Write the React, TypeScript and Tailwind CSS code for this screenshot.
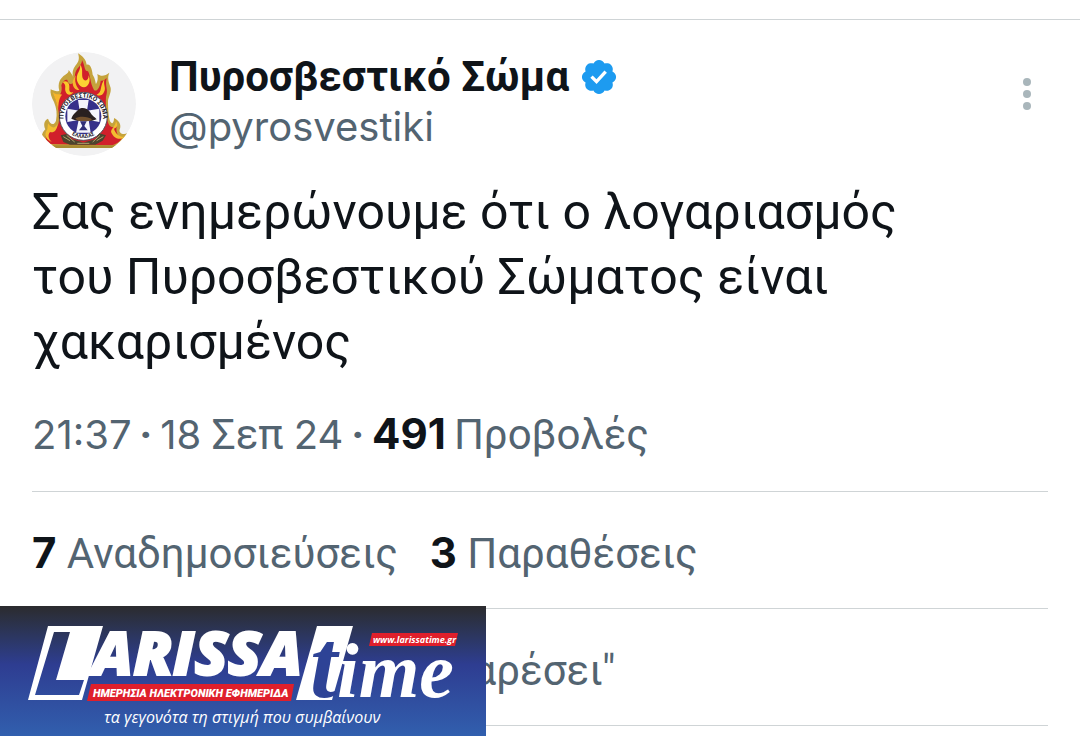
import type { ReactNode } from 'react';

const stats = [
  { count: '7', label: 'Αναδημοσιεύσεις' },
  { count: '3', label: 'Παραθέσεις' },
];

function Emblem() {
  return (
    <svg viewBox="36 36 312 312" className="size-[104px] shrink-0 rounded-full" role="img" aria-label="Πυροσβεστικό Σώμα">
      <circle cx="192" cy="192" r="156" fill="#f2f2f3" />
      {/* Flames */}
      <path
        d="M80 320C60 302 62 282 76 268C70 254 72 242 84 236C90 254 102 258 108 242C112 222 110 206 102 186C94 172 90 160 92 148C102 152 110 156 118 152C112 130 120 114 136 104C142 100 146 98 146 90C154 100 158 106 160 112C154 94 162 82 170 72C178 62 178 52 174 40C190 50 198 60 200 74C210 70 216 84 218 104C226 116 226 126 228 132C234 124 234 114 232 102C246 112 256 106 268 98C260 116 268 130 272 144C274 158 266 170 264 182C264 206 266 230 270 244C276 254 282 250 282 234C298 242 304 254 300 266C294 278 308 286 322 280C316 306 300 320 284 324H100Z"
        fill="#c5a33c"
      />
      <path
        d="M88 312C72 298 74 280 92 266C100 276 112 266 116 248C120 224 114 200 104 168C120 172 128 156 124 136C128 124 136 118 142 120C144 132 152 136 160 128C168 116 160 102 172 86C182 76 186 68 186 60C196 78 192 94 204 94C212 106 210 130 222 150C230 156 240 144 242 122C250 124 254 118 260 114C254 142 266 146 258 170C256 206 260 242 268 256C274 264 282 262 290 258C286 282 298 294 308 292C298 308 286 314 274 316Z"
        fill="#d1202b"
      />
      <path d="M128 126C140 118 150 130 148 144C146 156 154 160 160 156C152 168 140 166 136 152C134 142 140 136 128 126Z" fill="#f8c72a" />
      <path d="M180 74C192 86 182 106 190 118C198 126 206 120 206 106C214 124 204 142 192 142C176 140 166 120 172 104C176 94 182 88 180 74Z" fill="#fbd233" />
      <path d="M168 106C162 122 168 138 178 150C168 152 158 142 158 128C158 120 164 112 168 106Z" fill="#f6b52b" />
      <path d="M254 116C248 134 260 142 252 156C248 166 238 170 230 164C248 156 238 138 254 116Z" fill="#f8c72a" />
      <path d="M98 156C112 168 118 160 126 164C114 178 116 196 114 210C112 192 104 172 98 156Z" fill="#f6b52b" />
      <path d="M84 250C94 266 106 266 112 252C112 272 100 280 90 276C82 286 86 298 96 306C78 300 70 284 82 268Z" fill="#f3bd31" />
      <path d="M288 244C296 256 290 264 282 266C286 282 300 292 314 290C302 302 282 296 274 278C270 268 286 262 288 244Z" fill="#f3bd31" />
      {/* Round seal */}
      <circle cx="190" cy="229" r="72" fill="#fff" stroke="#55515b" strokeWidth="3" />
      <circle cx="190" cy="229" r="54" fill="#36308a" />
      <path d="M174 180H206L201 212L238 206V246L206 240L212 278H168L176 240L142 246V206L179 212Z" fill="#f4f4fb" />
      <path d="M154 236C160 220 170 216 176 208C186 200 202 204 210 216C214 226 226 232 230 238C214 246 176 246 154 236Z" fill="#292020" />
      <path d="M166 236C174 228 204 228 216 238L210 243H176Z" fill="#73512e" />
      <path d="M180 244H200L193 258L203 271H177L187 258Z" fill="#302e77" />
      <path id="seal-top" d="M135 253A59 59 0 1 1 245 253" fill="none" />
      <path id="seal-bottom" d="M139 270A66 66 0 0 0 241 270" fill="none" />
      <text className="font-['Roboto'] font-bold" fontSize="19" fill="#23202b">
        <textPath href="#seal-top" startOffset="50%" textAnchor="middle">ΠΥΡΟΣΒΕΣΤΙΚΟ ΣΩΜΑ</textPath>
      </text>
      <text className="font-['Roboto'] font-bold" fontSize="16" fill="#23202b">
        <textPath href="#seal-bottom" startOffset="50%" textAnchor="middle">ΕΛΛΑΔΑΣ</textPath>
      </text>
      {/* Laurel */}
      <path d="M122 286L140 282L156 298L178 304L190 308L204 304L226 298L238 280L258 286L248 302L226 314H150L130 306Z" fill="#4b442d" />
      <path d="M130 290L150 302M140 286L164 306M250 290L230 302M240 286L218 306M172 310H208" stroke="#b0a36e" strokeWidth="3" />
      <path d="M82 320H300" stroke="#a88b32" strokeWidth="8" />
    </svg>
  );
}

function VerifiedBadge() {
  return (
    <svg viewBox="0 0 22 22" className="size-10 shrink-0" role="img" aria-label="Verified">
      <path
        fill="#1d9bf0"
        d="M20.396 11c-.018-.646-.215-1.275-.57-1.816-.354-.54-.852-.972-1.438-1.246.223-.607.27-1.264.14-1.897-.131-.634-.437-1.218-.882-1.687-.47-.445-1.053-.75-1.687-.882-.633-.13-1.29-.083-1.897.14-.273-.587-.704-1.086-1.245-1.44S11.647 1.62 11 1.604c-.646.017-1.273.213-1.813.568s-.969.854-1.24 1.44c-.608-.223-1.267-.272-1.902-.14-.635.13-1.22.436-1.69.882-.445.47-.749 1.055-.878 1.688-.13.633-.08 1.29.144 1.896-.587.274-1.087.705-1.443 1.245-.356.54-.555 1.17-.574 1.817.02.647.218 1.276.574 1.817.356.54.856.972 1.443 1.245-.224.606-.274 1.263-.144 1.896.13.634.433 1.218.877 1.688.47.443 1.054.747 1.687.878.633.132 1.29.084 1.897-.136.274.586.705 1.084 1.246 1.439.54.354 1.17.551 1.816.569.647-.016 1.276-.213 1.817-.567s.972-.854 1.245-1.44c.604.239 1.266.296 1.903.164.636-.132 1.22-.447 1.68-.907.46-.46.776-1.044.908-1.681s.075-1.299-.165-1.903c.586-.274 1.084-.705 1.439-1.246.354-.54.551-1.17.569-1.816zM9.662 14.85l-3.429-3.428 1.293-1.302 2.072 2.072 4.4-4.794 1.347 1.246z"
      />
    </svg>
  );
}

// Station banner that lies over the lower left corner of the post
function Banner() {
  return (
    <a
      href="#larissatime"
      aria-label="Larissa time"
      className="absolute -top-[3px] left-0 block h-[130px] w-[486px] bg-linear-to-b from-[#2b2b2e] via-[#2e3d91] via-45% to-[#315fae]"
    >
      <svg viewBox="0 0 486 130" className="size-full">
        <path fillRule="evenodd" fill="#fff" d="M48 20H103L82 94H28ZM54 26L35 89H79L84 74H56L70 26Z" />
        <text x="92" y="69" fontSize="61" fill="#fff" stroke="#fff" strokeWidth="2" className="font-['Open_Sans'] font-extrabold italic">ARISSA</text>
        <path d="M91 78H294L291 95H87Z" fill="#df1f2b" />
        <text x="93" y="91" fontSize="11" fill="#fff" className="font-['Roboto'] font-black italic">ΗΜΕΡΗΣΙΑ ΗΛΕΚΤΡΟΝΙΚΗ ΕΦΗΜΕΡΙΔΑ</text>
        <path d="M317 20H353L332 94H296Z" fill="#fff" />
        <text x="310" y="91" fontSize="98" fill="#2e4396" className="font-['Liberation_Serif'] font-bold italic">t</text>
        <text x="337" y="91" fontSize="78" fill="#fff" className="font-['Liberation_Serif'] font-bold italic">ime</text>
        <path d="M372 27H458L455 40H369Z" fill="#df1f2b" />
        <text x="373" y="37" fontSize="9" fill="#fff" className="font-['Open_Sans'] font-bold italic">www.larissatime.gr</text>
        <text x="104" y="117" fontSize="16" fill="#fff" className="font-['Open_Sans'] font-medium italic">τα γεγονότα τη στιγμή που συμβαίνουν</text>
      </svg>
    </a>
  );
}

function Count({ children }: { children: ReactNode }) {
  return <strong className="font-['Inter',sans-serif] font-bold text-[#0f1419]">{children}</strong>;
}

function Row({ children }: { children: ReactNode }) {
  return <div className="flex h-[117px] items-center gap-x-8 border-b border-[#cfd4d6] pt-[6px] whitespace-nowrap">{children}</div>;
}

export default function App() {
  return (
    <main className="overflow-hidden bg-white pt-[19px] font-['Roboto',sans-serif] text-[42px] leading-[50px] text-[#536471]">
      <article className="border-t border-[#cfd4d6] pb-[11px]">
        <div className="px-8 pt-8">
          <header className="flex items-start">
            <Emblem />
            <div className="ml-[33px] min-w-0 flex-1">
              <div className="flex items-center gap-[10px]">
                <h1 className="font-bold text-[#0f1419]">Πυροσβεστικό Σώμα</h1>
                <VerifiedBadge />
              </div>
              <a href="#pyrosvestiki" className="block font-['Inter',sans-serif] text-[40px]">@pyrosvestiki</a>
            </div>
            <button type="button" aria-label="Περισσότερα" className="mt-5 flex w-[42px] justify-center">
              <svg viewBox="0 0 10 44" className="h-11 w-[10px]" fill="#a9b6bb">
                <circle cx="5" cy="10" r="4" />
                <circle cx="5" cy="22" r="4" />
                <circle cx="5" cy="34" r="4" />
              </svg>
            </button>
          </header>

          <p className="mt-6 max-w-[900px] text-[50px] leading-[65px] text-[#0f1419]">
            Σας ενημερώνουμε ότι ο λογαριασμός του Πυροσβεστικού Σώματος είναι χακαρισμένος
          </p>

          <div className="mt-[34px] flex items-baseline gap-x-2 border-b border-[#cfd4d6] pb-[31px] whitespace-nowrap">
            <span className="font-['Inter',sans-serif] text-[40px]">21:37</span>
            <span className="font-bold">·</span>
            <span>
              <span className="font-['Inter',sans-serif] text-[40px]">18</span> Σεπ{' '}
              <span className="font-['Inter',sans-serif] text-[40px]">24</span>
            </span>
            <span className="font-bold">·</span>
            <Count>491</Count>
            <span>Προβολές</span>
          </div>

          <Row>
            {stats.map((stat) => (
              <a key={stat.label} href="#stats">
                <Count>{stat.count}</Count> {stat.label}
              </a>
            ))}
          </Row>
        </div>

        <div className="relative">
          <div className="px-8">
            <Row>
              <a href="#likes">
                <Count>26</Count> επισημάνσεις "Μου αρέσει"
              </a>
            </Row>
          </div>
          <Banner />
        </div>
      </article>
    </main>
  );
}
